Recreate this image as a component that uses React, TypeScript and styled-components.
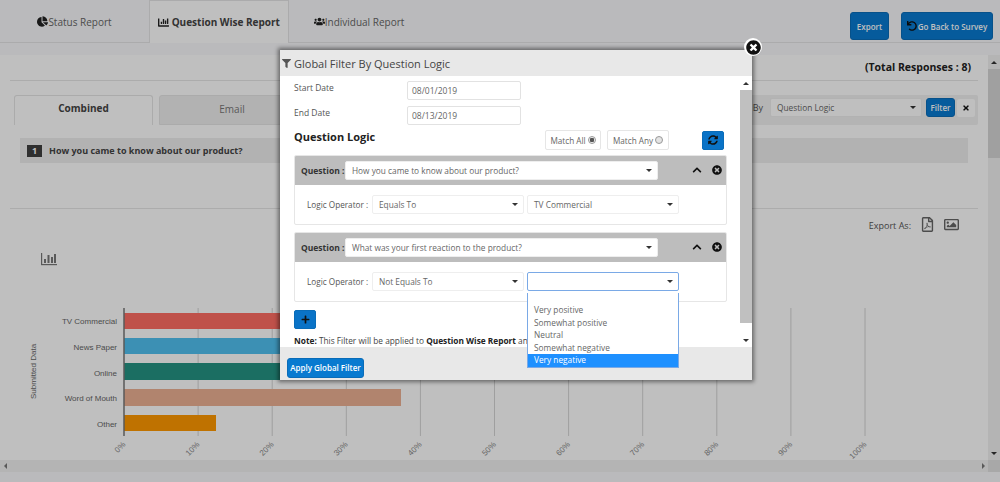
import React from "react";
import styled, { createGlobalStyle } from "styled-components";
import {
  FaChartBar,
  FaChartPie,
  FaChevronUp,
  FaFilter,
  FaPlus,
  FaRegFilePdf,
  FaRegImage,
  FaSyncAlt,
  FaTimes,
  FaTimesCircle,
  FaUndo,
  FaUsers,
} from "react-icons/fa";

const Global = createGlobalStyle`
  html, body { margin: 0; padding: 0; background: #fff; }
  body { font-family: "Open Sans", "Liberation Sans", sans-serif; color: #555; }
  * { box-sizing: border-box; }
`;

const Page = styled.div`
  position: relative;
  width: 1000px;
  height: 482px;
  overflow: hidden;
  background: #f8f9fb;
  display: flex;
  flex-direction: column;
`;

const TopBar = styled.div`
  height: 43px;
  flex: none;
  display: flex;
  align-items: flex-start;
  border-bottom: 1px solid #e4e4e6;
`;

const TopTab = styled.div<{ $active?: boolean; $w: number }>`
  width: ${(p) => p.$w}px;
  height: 43px;
  display: flex;
  align-items: center;
  justify-content: center;
  font-size: 10px;
  font-weight: ${(p) => (p.$active ? 700 : 400)};
  color: ${(p) => (p.$active ? "#444" : "#666")};
  background: ${(p) => (p.$active ? "#fff" : "transparent")};
  border-left: ${(p) => (p.$active ? "1px solid #e4e4e6" : "none")};
  border-right: ${(p) => (p.$active ? "1px solid #e4e4e6" : "none")};
  border-top: ${(p) => (p.$active ? "1px solid #e4e4e6" : "none")};
  svg { color: #222; font-size: 11px; flex: none; }
`;

const TopActions = styled.div`
  margin-left: auto;
  display: flex;
  gap: 12px;
  padding: 12px 7px 0 0;
`;

const PrimaryButton = styled.button<{ $w: number; $h: number }>`
  width: ${(p) => p.$w}px;
  height: ${(p) => p.$h}px;
  padding: 0;
  border: 1px solid #0a6cb8;
  border-radius: 3px;
  background: #087ad0;
  color: #fff;
  font-family: inherit;
  font-size: 8px;
  font-weight: 600;
  white-space: nowrap;
  display: inline-flex;
  align-items: center;
  justify-content: center;
  gap: 1px;
  flex: none;
  svg { color: #111; font-size: 10px; }
`;

const Band = styled.div`
  height: 12px;
  flex: none;
`;

const MainRow = styled.div`
  height: 405px;
  flex: none;
  display: flex;
`;

const Content = styled.div`
  width: 988px;
  flex: none;
  background: #fff;
  padding: 0 10px;
  overflow: hidden;
`;

const TotalRow = styled.div`
  height: 26px;
  border-bottom: 1px solid #e6e6e6;
  text-align: right;
  padding: 5px 7px 0 0;
  font-size: 10.5px;
  line-height: 15px;
  font-weight: 700;
  color: #222;
`;

const TabsRow = styled.div`
  margin-top: 14px;
  height: 30px;
  padding-left: 4px;
  display: flex;
  gap: 6px;
`;

const ModeTab = styled.div<{ $active?: boolean; $w: number }>`
  width: ${(p) => p.$w}px;
  height: 30px;
  display: flex;
  align-items: center;
  justify-content: center;
  padding-bottom: ${(p) => (p.$active ? 5 : 2)}px;
  font-size: 10px;
  font-weight: ${(p) => (p.$active ? 700 : 400)};
  color: ${(p) => (p.$active ? "#444" : "#777")};
  background: ${(p) => (p.$active ? "#fff" : "#eeeeee")};
  border: 1px solid #e4e4e4;
  border-bottom: ${(p) => (p.$active ? "none" : "1px solid #e4e4e4")};
  border-radius: 3px 3px 0 0;
`;

const FilterBar = styled.div`
  margin-left: auto;
  height: 30px;
  width: 380px;
  padding: 3px 3px 0 0;
  background: #f0f0f0;
  border-radius: 2px;
  display: flex;
  justify-content: flex-end;
  gap: 4px;
  align-items: flex-start;
`;

const ByLabel = styled.span`
  font-size: 9px;
  line-height: 19px;
  margin-right: 3px;
`;

const ClearButton = styled.button`
  width: 18px;
  height: 18px;
  margin: 1px 0 0 -2px;
  padding: 0;
  border: none;
  border-radius: 2px;
  background: #fff;
  color: #111;
  font-size: 8px;
  display: flex;
  align-items: center;
  justify-content: center;
`;

const QuestionBar = styled.div`
  margin: 13px 10px 0;
  height: 25px;
  background: #eeeeee;
  display: flex;
  align-items: center;
  gap: 7px;
  padding-left: 7px;
  font-size: 9px;
  font-weight: 700;
  color: #444;
`;

const NumberBadge = styled.span`
  width: 15px;
  height: 12px;
  background: #3f3f3f;
  color: #fff;
  font-size: 9px;
  line-height: 12px;
  text-align: center;
`;

const Divider = styled.div`
  margin-top: 45px;
  height: 1px;
  background: #e6e6e6;
`;

const ExportRow = styled.div`
  height: 32px;
  display: flex;
  justify-content: flex-end;
  align-items: flex-start;
  padding: 8px 19px 0 0;
  font-size: 9px;
  line-height: 18px;
  color: #555;
  svg { color: #666; font-size: 15px; margin-left: 9px; }
`;

const Chart = styled.svg`
  display: block;
  margin-left: -10px;
  width: 988px;
  height: 219px;
  font-family: "Liberation Sans", Arial, sans-serif;
`;

const VScroll = styled.div`
  width: 12px;
  flex: none;
  background: #f1f1f1;
  position: relative;
  display: flex;
  flex-direction: column;
  align-items: center;
`;

const Arrow = styled.i<{ $dir: "up" | "down" | "left" | "right" }>`
  display: block;
  width: 0;
  height: 0;
  flex: none;
  border-style: solid;
  border-color: transparent;
  border-width: 3px;
  ${(p) => (p.$dir === "up" ? "border-bottom-color:#333;border-top-width:0;" : "")}
  ${(p) => (p.$dir === "down" ? "border-top-color:#333;border-bottom-width:0;" : "")}
  ${(p) => (p.$dir === "left" ? "border-right-color:#777;border-left-width:0;" : "")}
  ${(p) => (p.$dir === "right" ? "border-left-color:#777;border-right-width:0;" : "")}
`;

const ScrollEnd = styled.div`
  height: 14px;
  width: 100%;
  flex: none;
  display: flex;
  align-items: center;
  justify-content: center;
`;

const VThumb = styled.div<{ $h: number; $color: string }>`
  width: 100%;
  height: ${(p) => p.$h}px;
  flex: none;
  background: ${(p) => p.$color};
`;

const Spacer = styled.div`
  flex: 1;
`;

const HScroll = styled.div`
  height: 12px;
  flex: none;
  background: #f1f1f1;
  display: flex;
  align-items: center;
  justify-content: space-between;
  padding: 0 15px 0 4px;
  position: relative;
  &::after {
    content: "";
    position: absolute;
    right: 0;
    top: 0;
    width: 12px;
    height: 12px;
    background: #e0e0e0;
  }
`;

const Overlay = styled.div`
  position: absolute;
  inset: 0;
  background: rgba(0, 0, 0, 0.25);
`;

const Modal = styled.div`
  position: absolute;
  left: 280px;
  top: 50px;
  width: 472px;
  height: 330px;
  background: #fff;
  box-shadow: 0 0 4px 2px rgba(0, 0, 0, 0.45);
  display: flex;
  flex-direction: column;
`;

const CloseBadge = styled.div`
  position: absolute;
  right: -10px;
  top: -12px;
  width: 18px;
  height: 18px;
  border-radius: 50%;
  background: #fff;
  color: #111;
  font-size: 15px;
  display: flex;
  align-items: center;
  justify-content: center;
`;

const ModalHeader = styled.div`
  height: 26px;
  flex: none;
  background: #e8e8e8;
  display: flex;
  align-items: center;
  gap: 3px;
  padding-left: 2px;
  font-size: 11px;
  color: #444;
  svg { font-size: 9px; color: #555; }
`;

const ModalMiddle = styled.div`
  height: 271px;
  flex: none;
  display: flex;
  overflow: hidden;
`;

const ModalBody = styled.div`
  width: 460px;
  flex: none;
  padding: 5px 13px 0 14px;
  overflow: hidden;
`;

const DateRow = styled.div`
  display: flex;
  height: 19px;
  margin-bottom: 6px;
`;

const DateLabel = styled.div`
  width: 113px;
  flex: none;
  font-size: 8.5px;
  line-height: 13px;
`;

const DateInput = styled.div`
  width: 114px;
  height: 19px;
  border: 1px solid #e2e2e2;
  border-radius: 2px;
  padding-left: 4px;
  font-size: 8.5px;
  line-height: 18px;
  color: #666;
`;

const LogicRow = styled.div`
  height: 20px;
  margin-top: -1px;
  display: flex;
  align-items: center;
`;

const LogicTitle = styled.div`
  font-size: 11px;
  font-weight: 700;
  color: #222;
  width: 251px;
  flex: none;
  margin-top: -8px;
`;

const MatchBox = styled.div<{ $w: number }>`
  width: ${(p) => p.$w}px;
  height: 20px;
  margin-right: 6px;
  border: 1px solid #e6e6e6;
  border-radius: 2px;
  display: flex;
  align-items: center;
  justify-content: center;
  gap: 2px;
  font-size: 8.2px;
  color: #666;
  white-space: nowrap;
  flex: none;
`;

const Radio = styled.span<{ $on?: boolean }>`
  width: 8px;
  height: 8px;
  border-radius: 50%;
  border: 1px solid #999;
  background: ${(p) => (p.$on ? "radial-gradient(circle, #555 0 2px, #eee 2.5px)" : "#e4e4e4")};
  flex: none;
`;

const RefreshButton = styled.button`
  width: 22px;
  height: 19px;
  margin-left: 27px;
  padding: 0;
  border: 1px solid #0a6cb8;
  border-radius: 2px;
  background: #0a73c7;
  color: #111;
  font-size: 10px;
  display: flex;
  align-items: center;
  justify-content: center;
`;

const Panel = styled.div`
  margin-top: 7px;
  width: 433px;
  height: 70px;
  border: 1px solid #e6e6e6;
  border-radius: 2px;
  overflow: hidden;
`;

const PanelFirst = styled(Panel)`
  margin-top: 5px;
`;

const PanelHead = styled.div`
  height: 30px;
  background: #bdbdbd;
  display: flex;
  align-items: center;
  padding-left: 7px;
  margin: -1px -1px 0;
`;

const PanelLabel = styled.span`
  width: 44px;
  flex: none;
  font-size: 8.5px;
  font-weight: 700;
  color: #333;
`;

const HeadIcons = styled.div`
  display: flex;
  align-items: center;
  gap: 10px;
  margin-left: 34px;
  color: #111;
  font-size: 10px;
`;

const PanelRow = styled.div`
  height: 39px;
  padding: 10px 0 0 12px;
  display: flex;
  gap: 3px;
`;

const OperatorLabel = styled.span`
  width: 62px;
  flex: none;
  font-size: 8.2px;
  line-height: 19px;
  color: #555;
  white-space: nowrap;
`;

const SelectBox = styled.div<{ $w: number; $focus?: boolean; $bg?: string }>`
  width: ${(p) => p.$w}px;
  height: 19px;
  flex: none;
  background: ${(p) => p.$bg || "#fff"};
  border: 1px solid ${(p) => (p.$focus ? "#7aa9e6" : "#eeeeee")};
  border-radius: 2px;
  padding: 0 5px 0 6px;
  display: flex;
  align-items: center;
  justify-content: space-between;
  font-size: 8.3px;
  color: #666;
  white-space: nowrap;
`;

const AddButton = styled.button`
  display: flex;
  align-items: center;
  justify-content: center;
  width: 22px;
  height: 19px;
  margin-top: 8px;
  padding: 0;
  border: 1px solid #0a6cb8;
  border-radius: 2px;
  background: #0a73c7;
  color: #111;
  font-size: 9px;
`;

const Note = styled.div`
  margin-top: 6px;
  font-size: 8.3px;
  line-height: 12px;
  color: #444;
  white-space: nowrap;
  b { color: #222; }
`;

const InnerScroll = styled.div`
  width: 12px;
  flex: none;
  background: #fff;
  display: flex;
  flex-direction: column;
  align-items: center;
`;

const ModalFooter = styled.div`
  height: 33px;
  flex: none;
  background: #e8e8e8;
  padding: 7px 0 0 7px;
`;

const DropList = styled.div`
  position: absolute;
  left: 247px;
  top: 243px;
  width: 152px;
  height: 75px;
  background: #fff;
  border: 1px solid #7aa9e6;
  border-top: none;
  padding-top: 11px;
`;

const DropItem = styled.div<{ $active?: boolean }>`
  height: 12.5px;
  line-height: 12.5px;
  padding-left: 6px;
  font-size: 8.3px;
  color: ${(p) => (p.$active ? "#fff" : "#666")};
  background: ${(p) => (p.$active ? "#1e90ff" : "transparent")};
`;

const selectCaret = <Arrow $dir="down" />;

const LABELS = ["TV Commercial", "News Paper", "Online", "Word of Mouth", "Other"];
const BARS = [
  { y: 313, h: 16, w: 300, c: "#ff6d63" },
  { y: 338, h: 16, w: 300, c: "#50c1f0" },
  { y: 363, h: 17, w: 300, c: "#249383" },
  { y: 389, h: 17, w: 277, c: "#edb093" },
  { y: 415, h: 16, w: 92, c: "#ff9900" },
];
const TICKS = Array.from({ length: 11 }, (_, i) => i);

export default function App() {
  return (
    <Page>
      <Global />
      <TopBar>
        <TopTab $w={149}>
          <FaChartPie />
          Status Report
        </TopTab>
        <TopTab $w={140} $active>
          <FaChartBar />
          &nbsp;Question Wise Report
        </TopTab>
        <TopTab $w={140}>
          <FaUsers />
          Individual Report
        </TopTab>
        <TopActions>
          <PrimaryButton $w={39} $h={28}>Export</PrimaryButton>
          <PrimaryButton $w={92} $h={28}>
            <FaUndo />
            Go Back to Survey
          </PrimaryButton>
        </TopActions>
      </TopBar>
      <Band />
      <MainRow>
        <Content>
          <TotalRow>(Total Responses : 8)</TotalRow>
          <TabsRow>
            <ModeTab $w={139} $active>Combined</ModeTab>
            <ModeTab $w={146}>Email</ModeTab>
            <FilterBar>
              <ByLabel>By</ByLabel>
              <SelectBox $w={152}>
                Question Logic
                {selectCaret}
              </SelectBox>
              <PrimaryButton $w={29} $h={19}>Filter</PrimaryButton>
              <ClearButton>
                <FaTimes />
              </ClearButton>
            </FilterBar>
          </TabsRow>
          <QuestionBar>
            <NumberBadge>1</NumberBadge>
            How you came to know about our product?
          </QuestionBar>
          <Divider />
          <ExportRow>
            Export As:
            <FaRegFilePdf />
            <FaRegImage />
          </ExportRow>
          <Chart viewBox="0 241 988 219">
            <g transform="translate(41 253)" fill="#777">
              <rect x="0" y="0" width="1.2" height="12" />
              <rect x="0" y="11" width="16" height="1.2" />
              <rect x="3" y="6" width="2" height="4" />
              <rect x="6.5" y="2" width="2" height="8" />
              <rect x="10" y="4" width="2" height="6" />
              <rect x="13" y="1" width="2" height="9" />
            </g>
            {TICKS.map((t) => {
              const x = 124 + t * 74.1;
              return (
                <g key={t}>
                  {t > 0 && <line x1={x} x2={x} y1={308} y2={436} stroke="#d4d4d4" strokeWidth={1} />}
                  <text
                    transform={`translate(${x + 2} 445) rotate(-45)`}
                    textAnchor="end"
                    fontSize={8}
                    fill="#888"
                  >
                    {t * 10}%
                  </text>
                </g>
              );
            })}
            {BARS.map((b) => (
              <rect key={b.y} x={124} y={b.y} width={b.w} height={b.h} fill={b.c} />
            ))}
            <line x1={124} x2={124} y1={308} y2={436} stroke="#777" strokeWidth={1.5} />
            {LABELS.map((l, i) => (
              <text key={l} x={117} y={[324, 350, 376, 401, 427][i]} textAnchor="end" fontSize={8} fill="#666">
                {l}
              </text>
            ))}
            <text transform="translate(36 399) rotate(-90)" fontSize={8} fill="#666">
              Submitted Data
            </text>
          </Chart>
        </Content>
        <VScroll>
          <ScrollEnd>
            <Arrow $dir="up" />
          </ScrollEnd>
          <VThumb $h={89} $color="#d6d6d6" />
          <Spacer />
          <ScrollEnd>
            <Arrow $dir="down" />
          </ScrollEnd>
        </VScroll>
      </MainRow>
      <HScroll>
        <Arrow $dir="left" />
        <Arrow $dir="right" />
      </HScroll>
      <Overlay />
      <Modal>
        <CloseBadge>
          <FaTimesCircle />
        </CloseBadge>
        <ModalHeader>
          <FaFilter />
          Global Filter By Question Logic
        </ModalHeader>
        <ModalMiddle>
          <ModalBody>
            <DateRow>
              <DateLabel>Start Date</DateLabel>
              <DateInput>08/01/2019</DateInput>
            </DateRow>
            <DateRow>
              <DateLabel>End Date</DateLabel>
              <DateInput>08/13/2019</DateInput>
            </DateRow>
            <LogicRow>
              <LogicTitle>Question Logic</LogicTitle>
              <MatchBox $w={56}>
                Match All <Radio $on />
              </MatchBox>
              <MatchBox $w={62}>
                Match Any <Radio />
              </MatchBox>
              <RefreshButton>
                <FaSyncAlt />
              </RefreshButton>
            </LogicRow>
            <PanelFirst>
              <PanelHead>
                <PanelLabel>Question :</PanelLabel>
                <SelectBox $w={313}>
                  How you came to know about our product?
                  {selectCaret}
                </SelectBox>
                <HeadIcons>
                  <FaChevronUp />
                  <FaTimesCircle />
                </HeadIcons>
              </PanelHead>
              <PanelRow>
                <OperatorLabel>Logic Operator :</OperatorLabel>
                <SelectBox $w={152}>
                  Equals To
                  {selectCaret}
                </SelectBox>
                <SelectBox $w={152}>
                  TV Commercial
                  {selectCaret}
                </SelectBox>
              </PanelRow>
            </PanelFirst>
            <Panel>
              <PanelHead>
                <PanelLabel>Question :</PanelLabel>
                <SelectBox $w={313}>
                  What was your first reaction to the product?
                  {selectCaret}
                </SelectBox>
                <HeadIcons>
                  <FaChevronUp />
                  <FaTimesCircle />
                </HeadIcons>
              </PanelHead>
              <PanelRow>
                <OperatorLabel>Logic Operator :</OperatorLabel>
                <SelectBox $w={152}>
                  Not Equals To
                  {selectCaret}
                </SelectBox>
                <SelectBox $w={152} $focus>
                  <span />
                  {selectCaret}
                </SelectBox>
              </PanelRow>
            </Panel>
            <AddButton>
              <FaPlus />
            </AddButton>
            <Note>
              <b>Note:</b> This Filter will be applied to <b>Question Wise Report</b> and Individual Report
            </Note>
          </ModalBody>
          <InnerScroll>
            <ScrollEnd>
              <Arrow $dir="up" />
            </ScrollEnd>
            <VThumb $h={233} $color="#c0c0c0" />
            <Spacer />
            <ScrollEnd>
              <Arrow $dir="down" />
            </ScrollEnd>
          </InnerScroll>
        </ModalMiddle>
        <ModalFooter>
          <PrimaryButton $w={77} $h={20}>Apply Global Filter</PrimaryButton>
        </ModalFooter>
        <DropList>
          <DropItem>Very positive</DropItem>
          <DropItem>Somewhat positive</DropItem>
          <DropItem>Neutral</DropItem>
          <DropItem>Somewhat negative</DropItem>
          <DropItem $active>Very negative</DropItem>
        </DropList>
      </Modal>
    </Page>
  );
}
